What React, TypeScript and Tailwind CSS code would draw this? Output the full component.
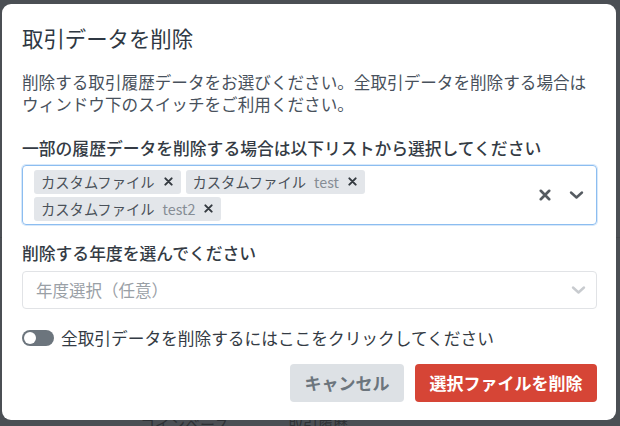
import React from "react";

const font = { fontFamily: '"Noto Sans CJK JP", "Noto Sans", sans-serif' };

function XIcon({ size = 9, className = "" }: { size?: number; className?: string }) {
  return (
    <svg width={size} height={size} viewBox="0 0 10 10" className={className}>
      <path d="M1.5 1.5 L8.5 8.5 M8.5 1.5 L1.5 8.5" stroke="currentColor" strokeWidth="2.2" strokeLinecap="round" />
    </svg>
  );
}

function Chevron({ className = "" }: { className?: string }) {
  return (
    <svg width="15" height="10" viewBox="0 0 15 10" className={className}>
      <path d="M2 2.5 L7.5 7.5 L13 2.5" stroke="currentColor" strokeWidth="2.4" fill="none" strokeLinecap="round" strokeLinejoin="round" />
    </svg>
  );
}

function Chip({ name, sub }: { name: string; sub?: string }) {
  return (
    <div className="flex h-[24px] items-center rounded-[3px] bg-[#e3e6ea] pl-[7px] pr-[8px] text-[14.3px] text-[#4a5159]">
      <span>{name}</span>
      {sub && <span className="ml-[8px] text-[#868d95]">{sub}</span>}
      <XIcon size={9} className="ml-[9px] text-[#343a40]" />
    </div>
  );
}

export default function App() {
  return (
    <div className="relative h-[426px] w-[620px] overflow-hidden bg-[#4b4f54]" style={font}>
      {/* faint background content */}
      <div className="absolute left-0 top-[237px] h-px w-[620px] bg-[#44484c]" />
      <div className="absolute left-[140px] top-[414px] text-[15px] leading-[20px] text-[#2e3135]">コインベース</div>
      <div className="absolute left-[288px] top-[414px] text-[15px] leading-[20px] text-[#2e3135]">取引履歴</div>

      <div className="pl-[2px] pt-[4px]">
        <div className="relative flex h-[416px] w-[614px] flex-col rounded-[9px] bg-white px-[19px] pl-[20px] pt-[20px]">
          <div className="h-[28px] text-[21.4px] leading-[28px] text-[#2f3843]">取引データを削除</div>
          <div className="mt-[19px] text-[16.6px] leading-[22px] text-[#48515c]">
            <div>削除する取引履歴データをお選びください。全取引データを削除する場合は</div>
            <div>ウィンドウ下のスイッチをご利用ください。</div>
          </div>
          <div className="mt-[22px] text-[16.8px] font-medium leading-[22px] text-[#343b44]">
            一部の履歴データを削除する場合は以下リストから選択してください
          </div>
          <div className="mt-[6px] flex h-[60px] items-center rounded-[4px] border border-[#8cbdf0] pl-[11px] pr-[12px] shadow-[0_0_0_1px_rgba(140,189,240,0.35)]">
            <div className="flex flex-1 flex-wrap gap-x-[5px] gap-y-[3px]">
              <Chip name="カスタムファイル" />
              <Chip name="カスタムファイル" sub="test" />
              <Chip name="カスタムファイル" sub="test2" />
            </div>
            <XIcon size={12} className="mr-[18px] text-[#555b61]" />
            <Chevron className="text-[#555b61]" />
          </div>

          <div className="mt-[17px] text-[16.8px] font-medium leading-[22px] text-[#343b44]">
            削除する年度を選んでください
          </div>
          <div className="mt-[7px] flex h-[38px] items-center rounded-[4px] border border-[#e1e3e6] pl-[13px] pr-[10px]">
            <span className="flex-1 text-[16.5px] text-[#9aa0a6]">年度選択（任意）</span>
            <Chevron className="text-[#c8cbcf]" />
          </div>

          <div className="mt-[18px] flex h-[22px] items-center">
            <div className="flex h-[16px] w-[32px] items-center rounded-full bg-[#6c757d] pl-[2px]">
              <div className="h-[12px] w-[12px] rounded-full bg-white" />
            </div>
            <span className="ml-[7px] text-[16.7px] leading-[22px] text-[#343b44]">
              全取引データを削除するにはここをクリックしてください
            </span>
          </div>

          <div className="mt-[15px] flex justify-end gap-[11px]">
            <button className="flex h-[38px] w-[114px] items-center justify-center rounded-[4px] bg-[#dde1e5] text-[17px] font-bold text-[#6c757d]">
              キャンセル
            </button>
            <button className="flex h-[38px] w-[182px] items-center justify-center rounded-[4px] bg-[#d64536] text-[17px] font-bold text-white">
              選択ファイルを削除
            </button>
          </div>
        </div>
      </div>
    </div>
  );
}
